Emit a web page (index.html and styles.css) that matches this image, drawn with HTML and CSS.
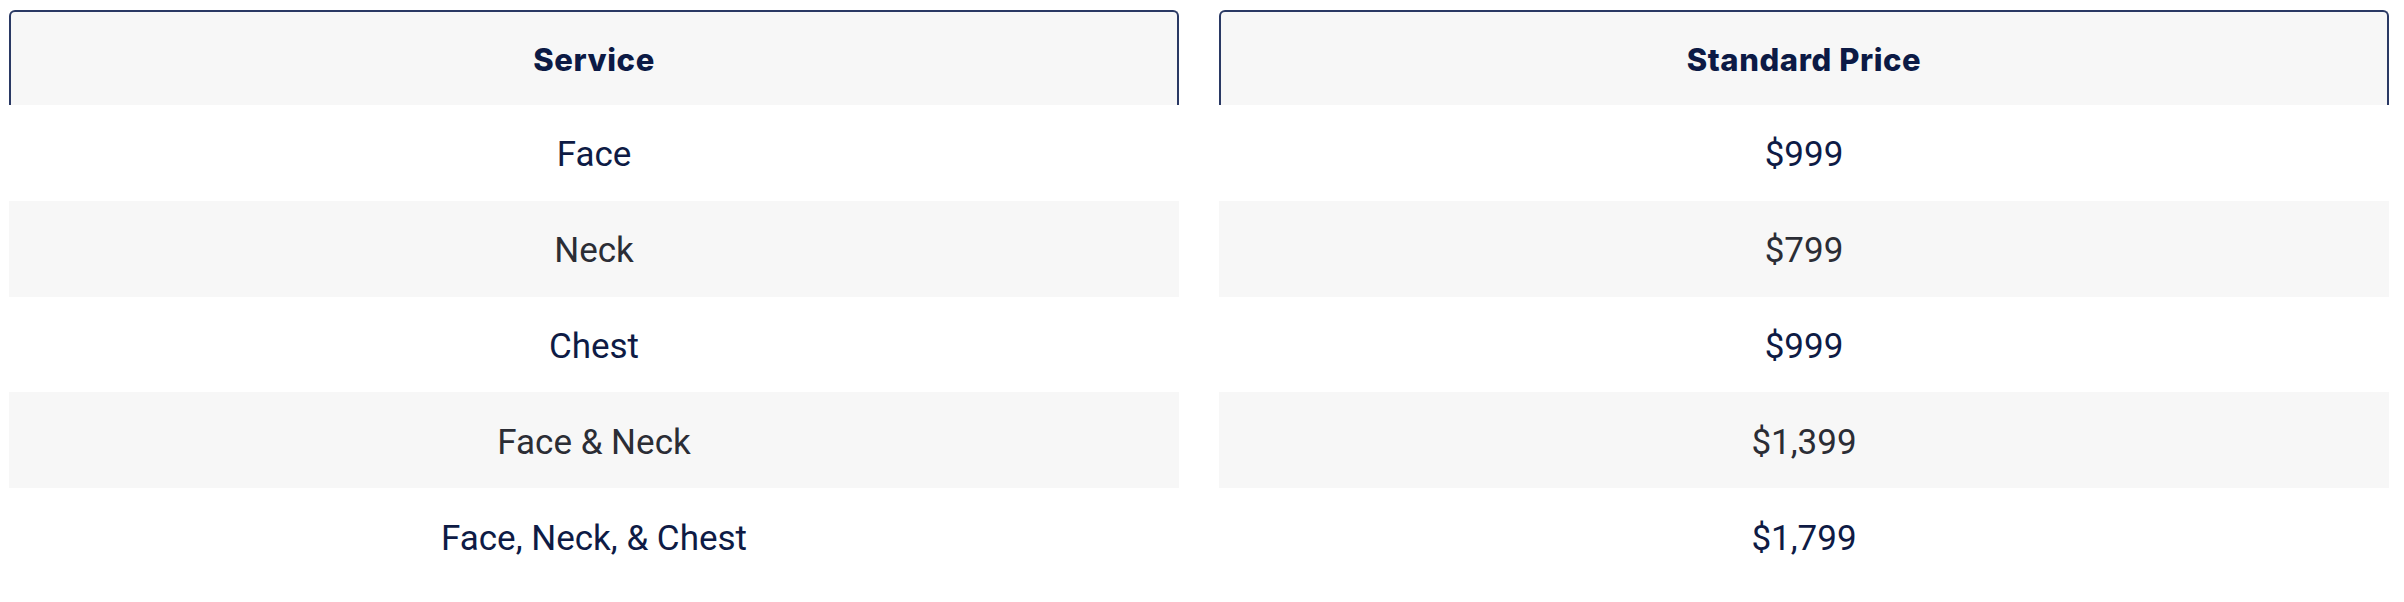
FILE: index.html
```html
<!DOCTYPE html>
<html lang="en">
<head>
<meta charset="utf-8">
<title>Pricing</title>
<link rel="stylesheet" href="styles.css">
</head>
<body>
<main class="pricing">
  <section class="col">
    <div class="col-head">Service</div>
    <div class="cell odd">Face</div>
    <div class="cell even">Neck</div>
    <div class="cell odd">Chest</div>
    <div class="cell even">Face &amp; Neck</div>
    <div class="cell odd">Face, Neck, &amp; Chest</div>
  </section>
  <section class="col">
    <div class="col-head">Standard Price</div>
    <div class="cell odd">$999</div>
    <div class="cell even">$799</div>
    <div class="cell odd">$999</div>
    <div class="cell even">$1,399</div>
    <div class="cell odd">$1,799</div>
  </section>
</main>
</body>
</html>
```

FILE: styles.css
```css
html, body {
  margin: 0;
  padding: 0;
  background: #ffffff;
}

.pricing {
  display: grid;
  grid-template-columns: 1170px 1170px;
  column-gap: 40px;
  padding: 10px 0 0 9px;
}

.col {
  display: flex;
  flex-direction: column;
}

.col-head {
  height: 95px;
  box-sizing: border-box;
  border: 2px solid #2a3964;
  border-bottom: none;
  border-radius: 6px 6px 0 0;
  background: #f7f7f7;
  display: flex;
  align-items: center;
  justify-content: center;
  font-family: Inter, "Liberation Sans", sans-serif;
  font-weight: 800;
  font-size: 31px;
  letter-spacing: 0.6px;
  color: #0c1a45;
  padding-top: 2px;
}

.cell {
  height: 95.8px;
  display: flex;
  align-items: center;
  justify-content: center;
  font-family: Roboto, "Liberation Sans", sans-serif;
  font-size: 35px;
  font-weight: 400;
  padding-top: 4px;
  box-sizing: border-box;
}

.odd {
  background: #ffffff;
  color: #0e1b45;
}

.even {
  background: #f7f7f7;
  color: #2b2d35;
}
```
